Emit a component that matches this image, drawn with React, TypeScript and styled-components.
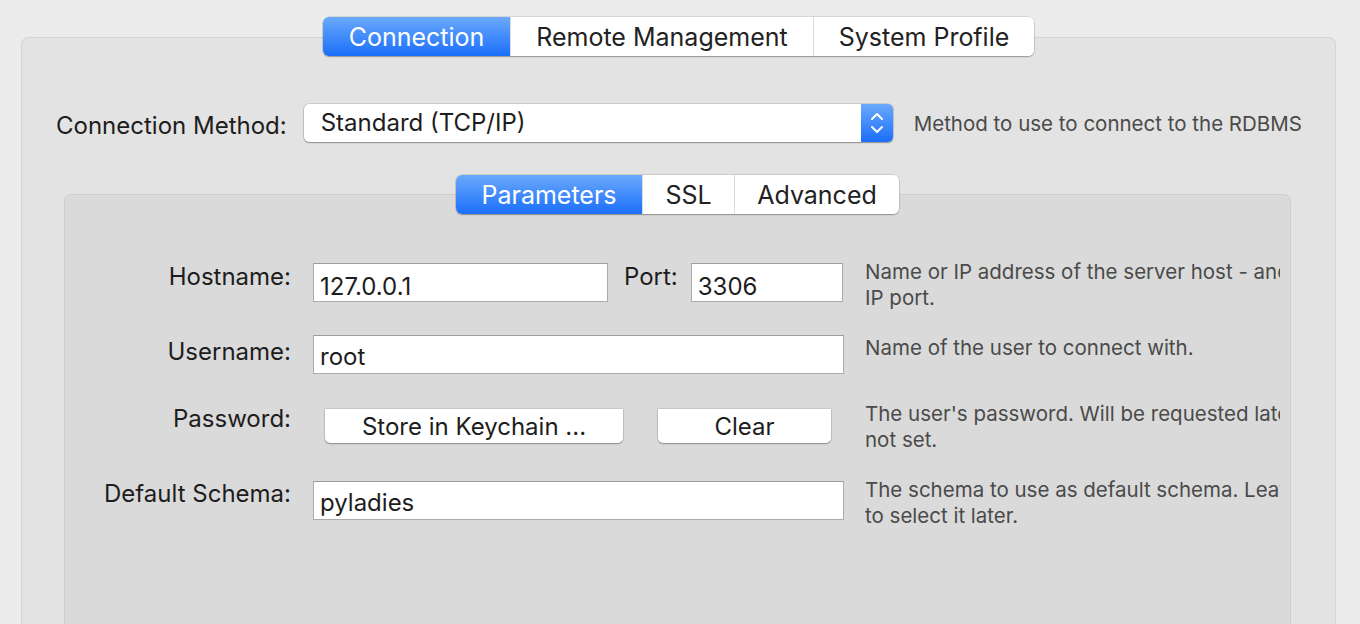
import React from "react";
import styled, { createGlobalStyle } from "styled-components";

const Global = createGlobalStyle`
  html, body { margin: 0; padding: 0; background: #ececec; overflow: hidden; }
  body { font-family: Inter, Roboto, "Noto Sans", "Liberation Sans", sans-serif; color: #1d1d1d; }
`;

const Page = styled.div`
  width: 1360px;
  height: 624px;
  overflow: hidden;
  padding: 37px 0 0 21px;
  box-sizing: border-box;
`;

const OuterPanel = styled.div`
  width: 1315px;
  height: 700px;
  box-sizing: border-box;
  background: #e3e3e3;
  border: 1px solid #d5d5d5;
  border-radius: 7px;
  display: flex;
  flex-direction: column;
`;

const TabBar = styled.div<{ $offset: number }>`
  align-self: center;
  display: flex;
  margin-top: ${(p) => p.$offset}px;
  height: 39px;
  background: #fff;
  border-radius: 6px;
  box-shadow: 0 0 0 0.5px rgba(0, 0, 0, 0.18), 0 1px 1.5px rgba(0, 0, 0, 0.28);
  overflow: hidden;
`;

const Tab = styled.div<{ $active?: boolean; $w: number }>`
  width: ${(p) => p.$w}px;
  display: flex;
  align-items: center;
  justify-content: center;
  font-size: 25px;
  padding-top: 1px;
  box-sizing: border-box;
  color: ${(p) => (p.$active ? "#fff" : "#222")};
  background: ${(p) => (p.$active ? "linear-gradient(#6aa9fb, #1a6efa)" : "#fff")};
  & + & {
    border-left: 1px solid ${(p) => (p.$active ? "transparent" : "#dcdcdc")};
  }
`;

const MethodRow = styled.div`
  display: flex;
  align-items: flex-start;
  margin: 48px 0 0 34px;
  height: 38px;
`;

const BigLabel = styled.div`
  font-size: 24px;
  line-height: 24px;
  color: #1d1d1d;
  margin-top: 10px;
`;

const Select = styled.div`
  margin-left: 17px;
  width: 589px;
  height: 38px;
  display: flex;
  background: #fff;
  border-radius: 5px;
  box-shadow: 0 0 0 0.5px rgba(0, 0, 0, 0.2), 0 1px 1.5px rgba(0, 0, 0, 0.3);
  overflow: hidden;
`;

const SelectValue = styled.div`
  flex: 1;
  padding: 7px 0 0 17px;
  font-size: 24px;
  line-height: 24px;
  color: #1d1d1d;
`;

const SelectArrow = styled.div`
  width: 32px;
  background: linear-gradient(#6aa9fb, #1a6efa);
  display: flex;
  align-items: center;
  justify-content: center;
`;

const Help = styled.div`
  font-size: 20.5px;
  color: #4a4a4a;
  line-height: 26px;
`;

const MethodHelp = styled(Help)`
  margin: 7px 0 0 21px;
`;

const InnerWrap = styled.div`
  margin: 33px 0 0 42px;
  width: 1227px;
  display: flex;
  flex-direction: column;
`;

const InnerPanel = styled.div`
  margin-top: -20px;
  height: 480px;
  box-sizing: border-box;
  background: #dadada;
  border: 1px solid #cecece;
  border-radius: 7px;
  display: flex;
  flex-direction: column;
`;

const InnerTabs = styled(TabBar)`
  position: relative;
  z-index: 1;
`;

const Form = styled.div`
  margin-top: 68px;
  display: grid;
  grid-template-columns: 226px 532px 415px;
  grid-template-rows: 39px 39px 39px 39px;
  column-gap: 21px;
  row-gap: 33px;
  align-items: start;
`;

const Label = styled.div<{ $shift: number }>`
  grid-column: 1;
  text-align: right;
  font-size: 24px;
  line-height: 24px;
  color: #1d1d1d;
  margin-top: ${(p) => p.$shift}px;
`;

const Field = styled.div<{ $shift: number }>`
  margin-left: 1px;
  margin-top: ${(p) => p.$shift}px;
  display: flex;
  align-items: flex-start;
`;

const Input = styled.div<{ $w: number; $pad: number }>`
  width: ${(p) => p.$w}px;
  height: 39px;
  box-sizing: border-box;
  background: #fff;
  border: 1px solid #ababab;
  border-top-color: #9d9d9d;
  font-size: 24px;
  line-height: 24px;
  color: #1d1d1d;
  padding: ${(p) => p.$pad}px 0 0 6px;
`;

const InlineLabel = styled.div`
  font-size: 24px;
  line-height: 24px;
  color: #1d1d1d;
  margin: 2px 13px 0 16px;
`;

const Buttons = styled.div`
  display: flex;
  gap: 35px;
  padding: 2px 0 0 12px;
`;

const Button = styled.div<{ $w: number }>`
  width: ${(p) => p.$w}px;
  height: 34px;
  box-sizing: border-box;
  background: #fff;
  border-radius: 0 0 5px 5px;
  box-shadow: 0 0 0 0.5px rgba(0, 0, 0, 0.15), 0 1px 1.5px rgba(0, 0, 0, 0.3);
  font-size: 24px;
  line-height: 24px;
  color: #1d1d1d;
  display: flex;
  align-items: center;
  justify-content: center;
  padding-top: 1px;
`;

const HelpCell = styled(Help)<{ $shift: number }>`
  overflow: hidden;
  width: 415px;
  margin-top: ${(p) => p.$shift - 6}px;
`;

const Line = styled.div`
  white-space: nowrap;
`;

type Row = {
  label: string;
  help: string[];
  kind: "host" | "input" | "buttons";
  value?: string;
  field: number;
  labelShift: number;
  helpShift: number;
};

const rows: Row[] = [
  { label: "Hostname:", kind: "host", field: 0, labelShift: 2, helpShift: 2, help: ["Name or IP address of the server host - and TCP/IP", "IP port."] },
  { label: "Username:", kind: "input", value: "root", field: 0, labelShift: 5, helpShift: 6, help: ["Name of the user to connect with."] },
  { label: "Password:", kind: "buttons", field: 0, labelShift: 0, helpShift: 0, help: ["The user's password. Will be requested later if it's", "not set."] },
  { label: "Default Schema:", kind: "input", value: "pyladies", field: 2, labelShift: 3, helpShift: 4, help: ["The schema to use as default schema. Leave blank", "to select it later."] },
];

export default function App() {
  return (
    <>
      <Global />
      <Page>
        <OuterPanel>
          <TabBar $offset={-21}>
            <Tab $active $w={187}>Connection</Tab>
            <Tab $w={303}>Remote Management</Tab>
            <Tab $w={221}>System Profile</Tab>
          </TabBar>
          <MethodRow>
            <BigLabel>Connection Method:</BigLabel>
            <Select>
              <SelectValue>Standard (TCP/IP)</SelectValue>
              <SelectArrow>
                <svg width="14" height="26" viewBox="0 0 14 26" fill="none" stroke="#fff" strokeWidth="2" strokeLinecap="round" strokeLinejoin="round">
                  <path d="M2 9 L7 4 L12 9" />
                  <path d="M2 17 L7 22 L12 17" />
                </svg>
              </SelectArrow>
            </Select>
            <MethodHelp>Method to use to connect to the RDBMS</MethodHelp>
          </MethodRow>
          <InnerWrap>
            <InnerTabs $offset={0}>
              <Tab $active $w={186}>Parameters</Tab>
              <Tab $w={92}>SSL</Tab>
              <Tab $w={165}>Advanced</Tab>
            </InnerTabs>
            <InnerPanel>
              <Form>
                {rows.map((r) => (
                  <React.Fragment key={r.label}>
                    <Label $shift={r.labelShift}>{r.label}</Label>
                    <Field $shift={r.field}>
                      {r.kind === "host" && (
                        <>
                          <Input $w={295} $pad={11}>127.0.0.1</Input>
                          <InlineLabel>Port:</InlineLabel>
                          <Input $w={152} $pad={11}>3306</Input>
                        </>
                      )}
                      {r.kind === "input" && <Input $w={532} $pad={9}>{r.value}</Input>}
                      {r.kind === "buttons" && (
                        <Buttons>
                          <Button $w={298}>Store in Keychain ...</Button>
                          <Button $w={173}>Clear</Button>
                        </Buttons>
                      )}
                    </Field>
                    <HelpCell $shift={r.helpShift}>
                      {r.help.map((l) => (
                        <Line key={l}>{l}</Line>
                      ))}
                    </HelpCell>
                  </React.Fragment>
                ))}
              </Form>
            </InnerPanel>
          </InnerWrap>
        </OuterPanel>
      </Page>
    </>
  );
}
